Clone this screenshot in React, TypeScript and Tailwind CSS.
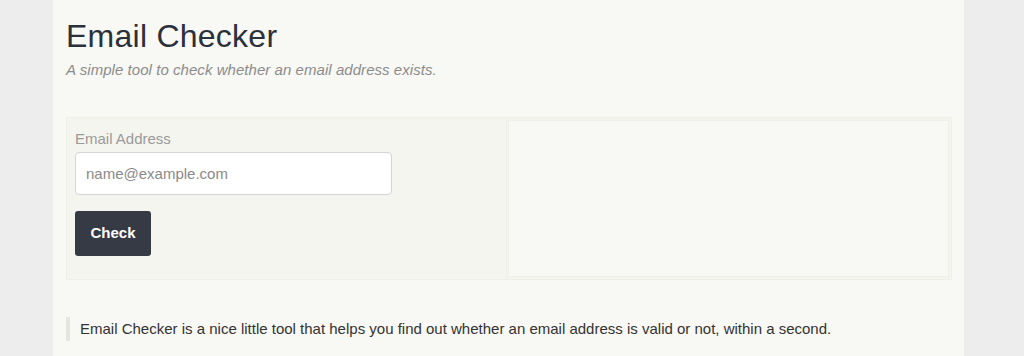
import React from "react";

export default function App() {
  return (
    <div className="min-h-[356px] w-full bg-[#ededed] font-['Liberation_Sans',Arial,sans-serif]">
      <div className="ml-[53px] min-h-[356px] w-[911px] bg-[#f8f8f4] px-[13px] pt-[17px]">
        <h1 className="text-[32px] leading-[38px] tracking-[0.25px] text-[#2b303b]">
          Email Checker
        </h1>
        <p className="mt-[6px] text-[15px] leading-[18px] italic tracking-[0.05px] text-[#8c8c8c]">
          A simple tool to check whether an email address exists.
        </p>

        <div className="mt-[38px] flex h-[163px] w-[886px] border border-[#efefe9] bg-[#f5f5f0]">
          <div className="w-[440px] border-r border-[#efefe9] px-[8px] pt-[12px]">
            <label className="block text-[15px] leading-[18px] text-[#9a9a9a]">
              Email Address
            </label>
            <input
              type="email"
              placeholder="name@example.com"
              className="mt-[4px] block h-[43px] w-[317px] rounded-[4px] border border-[#d4d4d4] bg-white px-[10px] text-[15px] text-[#555] placeholder:text-[#8a8a8a] outline-none"
            />
            <button className="mt-[16px] h-[45px] w-[76px] rounded-[3px] bg-[#363a44] text-[15px] font-bold text-white">
              Check
            </button>
          </div>
          <div className="m-[2px] ml-[1px] flex-1 border border-[#efefe9] bg-[#f8f8f4]" />
        </div>

        <blockquote className="mt-[37px] border-l-[4px] border-[#e6e6e1] pl-[10px] text-[15px] leading-[24px] text-[#333]">
          Email Checker is a nice little tool that helps you find out whether an email address is valid or not, within a second.
        </blockquote>
      </div>
    </div>
  );
}
